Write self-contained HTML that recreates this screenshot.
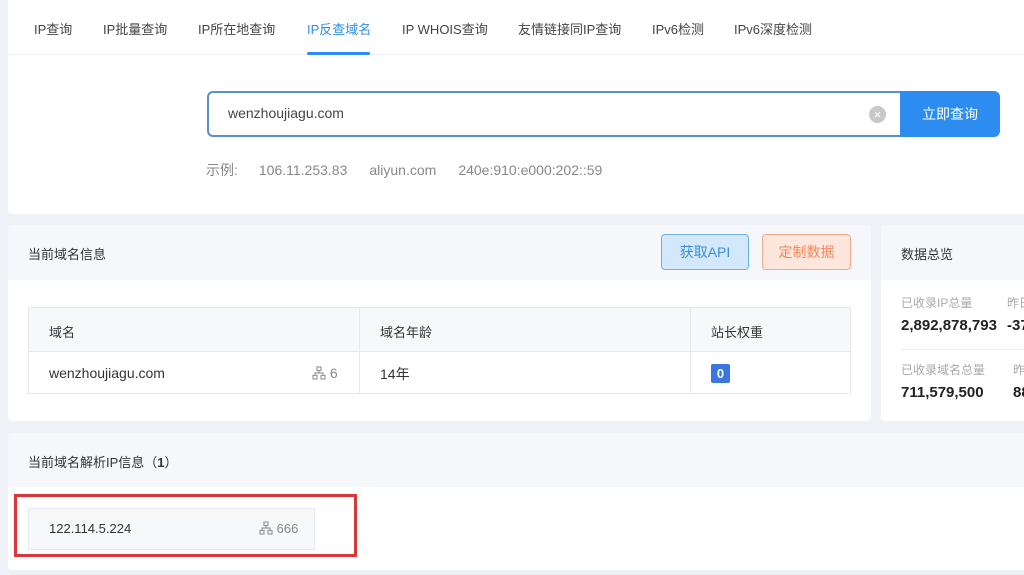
<!DOCTYPE html>
<html><head><meta charset="utf-8"><style>
*{margin:0;padding:0;box-sizing:border-box}
body{width:1024px;height:575px;overflow:hidden;background:#eef1f5;font-family:"Liberation Sans","Noto Sans CJK SC",sans-serif;color:#333;position:relative}
.abs{position:absolute;white-space:nowrap}
.card{position:absolute;background:#fff;border-radius:4px}
.nav span{position:absolute;top:19px;font-size:13px;color:#444;white-space:nowrap}
.gray{color:#888}
.ic{display:inline-block;vertical-align:-2px}
</style></head><body>
<div class="card" style="left:8px;top:0;width:1024px;height:214px;border-radius:0 0 4px 4px">
  <div class="nav">
    <span style="left:26px">IP查询</span>
    <span style="left:95px">IP批量查询</span>
    <span style="left:190px">IP所在地查询</span>
    <span style="left:299px;color:#2d8cf0">IP反查域名</span>
    <span style="left:394px">IP WHOIS查询</span>
    <span style="left:510px">友情链接同IP查询</span>
    <span style="left:644px">IPv6检测</span>
    <span style="left:726px">IPv6深度检测</span>
  </div>
  <div class="abs" style="left:0;top:54px;width:1016px;height:1px;background:#eef0f3"></div>
  <div class="abs" style="left:299px;top:52px;width:63px;height:3px;background:#2d8cf0;border-radius:2px"></div>
  <div class="abs" style="left:199px;top:91px;width:694px;height:46px;border:2px solid #5b8fc7;border-right:none;border-radius:6px 0 0 6px"></div>
  <div class="abs" style="left:220px;top:105px;font-size:14px;color:#444">wenzhoujiagu.com</div>
  <div class="abs" style="left:861px;top:106px;width:17px;height:17px;border-radius:50%;background:#c8c8c8;color:#fff;font-size:13px;line-height:17px;text-align:center">×</div>
  <div class="abs" style="left:892px;top:91px;width:100px;height:46px;background:#2d8cf0;border-radius:0 6px 6px 0;color:#fff;font-size:14px;line-height:46px;text-align:center">立即查询</div>
  <div class="abs gray" style="left:198px;top:160px;font-size:14px"><span>示例:</span><span style="margin-left:21px">106.11.253.83</span><span style="margin-left:22px">aliyun.com</span><span style="margin-left:22px">240e:910:e000:202::59</span></div>
</div>

<div class="card" style="left:8px;top:225px;width:863px;height:196px;overflow:hidden">
  <div class="abs" style="left:0;top:0;width:863px;height:55px;background:#f5f7fa"></div>
  <div class="abs" style="left:20px;top:19px;font-size:13px">当前域名信息</div>
  <div class="abs" style="left:653px;top:9px;width:88px;height:36px;background:#d3e8fb;border:1px solid #6fb1ea;border-radius:4px;color:#3d8ed8;font-size:14px;line-height:34px;text-align:center">获取API</div>
  <div class="abs" style="left:754px;top:9px;width:89px;height:36px;background:#fde6dc;border:1px solid #f0a98a;border-radius:4px;color:#f08a5d;font-size:14px;line-height:34px;text-align:center">定制数据</div>
  <div class="abs" style="left:20px;top:82px;width:823px;height:87px;border:1px solid #e6e8eb">
    <div class="abs" style="left:0;top:0;width:821px;height:44px;background:#f7f8fa;border-bottom:1px solid #e6e8eb"></div>
    <div class="abs" style="left:330px;top:0;width:1px;height:85px;background:#e6e8eb"></div>
    <div class="abs" style="left:661px;top:0;width:1px;height:85px;background:#e6e8eb"></div>
    <div class="abs" style="left:20px;top:14px;font-size:13px">域名</div>
    <div class="abs" style="left:351px;top:14px;font-size:13px">域名年龄</div>
    <div class="abs" style="left:682px;top:14px;font-size:13px">站长权重</div>
    <div class="abs" style="left:20px;top:57px;font-size:14px">wenzhoujiagu.com</div>
    <div class="abs gray" style="left:283px;top:57px;font-size:14px"><svg class="ic" width="14" height="14" viewBox="0 0 14 14" fill="none" stroke="#999" stroke-width="1.2"><rect x="5" y="1" width="4" height="3.5"/><rect x="1" y="9.5" width="4" height="3.5"/><rect x="9" y="9.5" width="4" height="3.5"/><path d="M7 4.5V7M3 9.5V7H11V9.5"/></svg> 6</div>
    <div class="abs" style="left:351px;top:56px;font-size:14px">14年</div>
    <div class="abs" style="left:682px;top:56px;width:19px;height:19px;background:#3a75e0;border-radius:2px;color:#fff;font-size:13px;font-weight:bold;line-height:19px;text-align:center">0</div>
  </div>
</div>

<div class="card" style="left:881px;top:225px;width:150px;height:196px;overflow:hidden">
  <div class="abs" style="left:0;top:0;width:150px;height:55px;background:#f5f7fa"></div>
  <div class="abs" style="left:20px;top:19px;font-size:13px">数据总览</div>
  <div class="abs" style="left:20px;top:69px;font-size:12px;color:#aaa">已收录IP总量</div>
  <div class="abs" style="left:126px;top:69px;font-size:12px;color:#aaa">昨日</div>
  <div class="abs" style="left:20px;top:92px;font-size:15px;font-weight:bold;color:#222">2,892,878,793</div>
  <div class="abs" style="left:126px;top:92px;font-size:15px;font-weight:bold;color:#222">-37</div>
  <div class="abs" style="left:20px;top:124px;width:130px;height:1px;background:#eee"></div>
  <div class="abs" style="left:20px;top:136px;font-size:12px;color:#aaa">已收录域名总量</div>
  <div class="abs" style="left:132px;top:136px;font-size:12px;color:#aaa">昨日</div>
  <div class="abs" style="left:20px;top:159px;font-size:15px;font-weight:bold;color:#222">711,579,500</div>
  <div class="abs" style="left:132px;top:159px;font-size:15px;font-weight:bold;color:#222">88</div>
</div>

<div class="card" style="left:8px;top:433px;width:1024px;height:137px;overflow:hidden">
  <div class="abs" style="left:0;top:0;width:1024px;height:54px;background:#f5f7fa"></div>
  <div class="abs" style="left:20px;top:19px;font-size:13px">当前域名解析IP信息（<b>1</b>）</div>
  <div class="abs" style="left:20px;top:75px;width:287px;height:42px;background:#f7f8fa;border:1px solid #e8e9eb">
    <div class="abs" style="left:20px;top:12px;font-size:13px">122.114.5.224</div>
    <div class="abs gray" style="left:230px;top:12px;font-size:13px"><svg class="ic" width="14" height="14" viewBox="0 0 14 14" fill="none" stroke="#999" stroke-width="1.2"><rect x="5" y="1" width="4" height="3.5"/><rect x="1" y="9.5" width="4" height="3.5"/><rect x="9" y="9.5" width="4" height="3.5"/><path d="M7 4.5V7M3 9.5V7H11V9.5"/></svg> 666</div>
  </div>
</div>
<div class="abs" style="left:14px;top:494px;width:343px;height:63px;border:3px solid #d9383a"></div>
</body></html>
